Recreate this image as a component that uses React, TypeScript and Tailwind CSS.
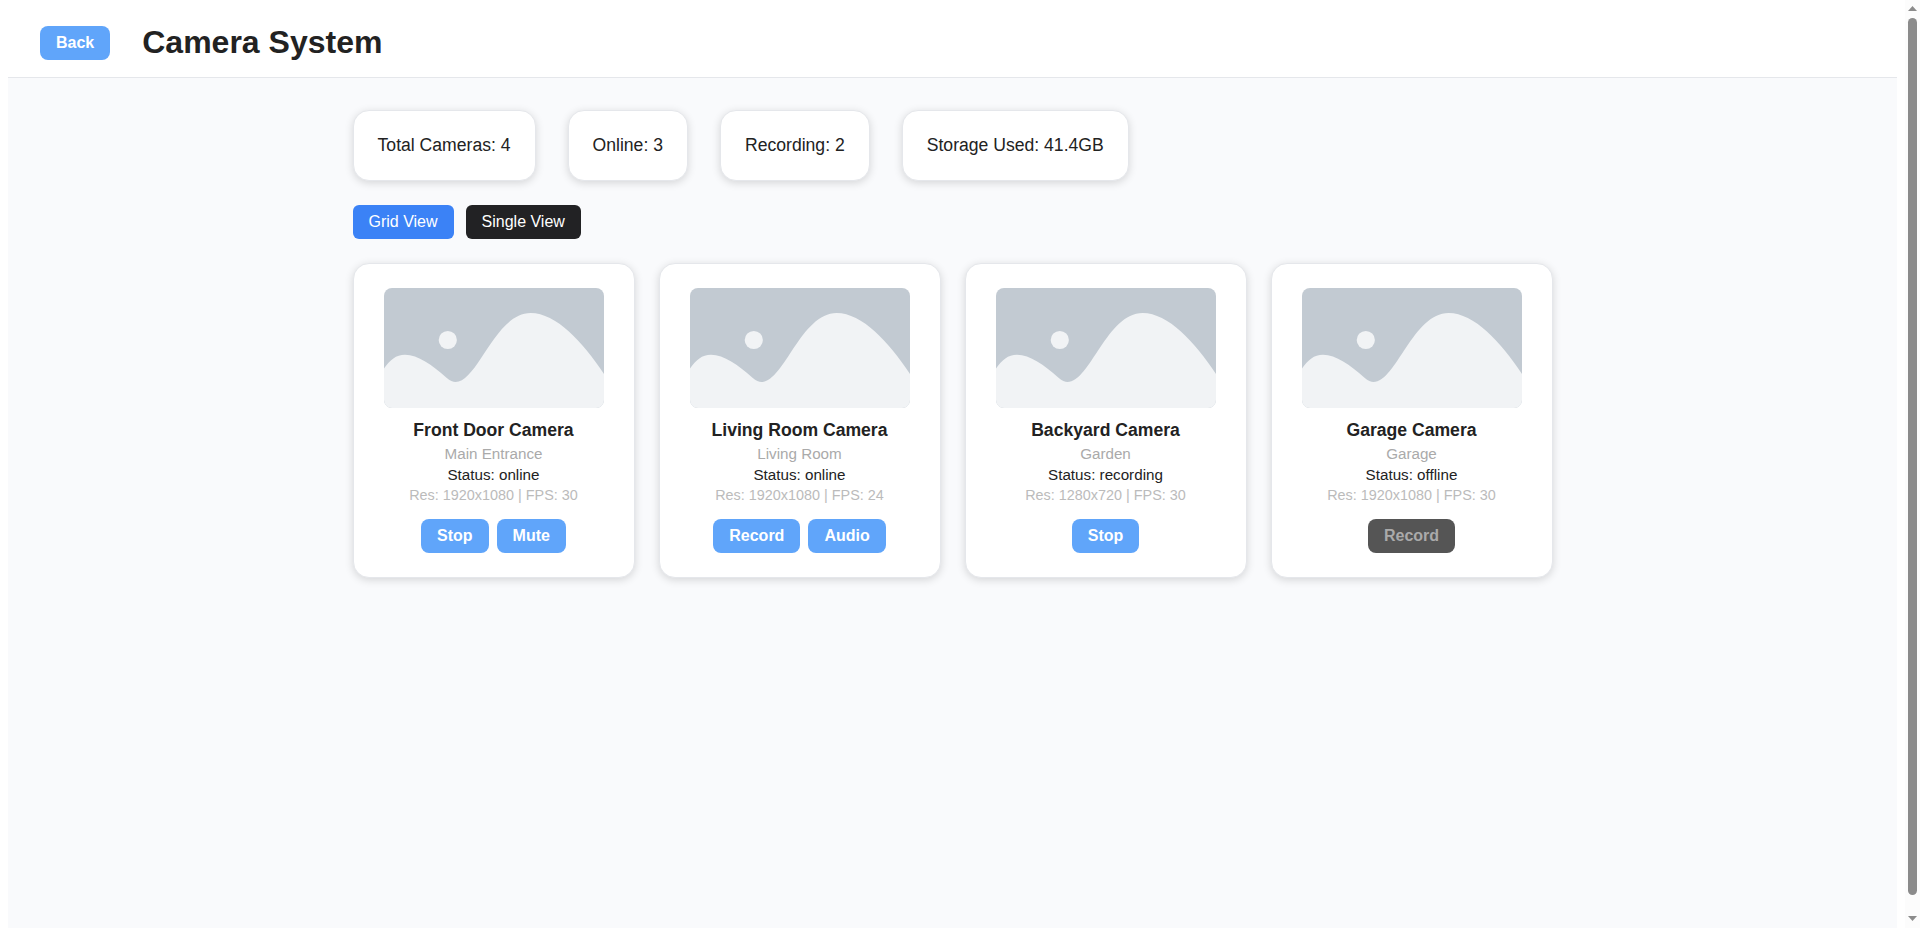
type Camera = {
  name: string;
  location: string;
  status: string;
  resolution: string;
  fps: number;
  actions: { label: string; disabled?: boolean }[];
};

const cameras: Camera[] = [
  { name: "Front Door Camera", location: "Main Entrance", status: "online", resolution: "1920x1080", fps: 30, actions: [{ label: "Stop" }, { label: "Mute" }] },
  { name: "Living Room Camera", location: "Living Room", status: "online", resolution: "1920x1080", fps: 24, actions: [{ label: "Record" }, { label: "Audio" }] },
  { name: "Backyard Camera", location: "Garden", status: "recording", resolution: "1280x720", fps: 30, actions: [{ label: "Stop" }] },
  { name: "Garage Camera", location: "Garage", status: "offline", resolution: "1920x1080", fps: 30, actions: [{ label: "Record", disabled: true }] },
];

const stats = ["Total Cameras: 4", "Online: 3", "Recording: 2", "Storage Used: 41.4GB"];

function ActionButton({ label, disabled }: { label: string; disabled?: boolean }) {
  return (
    <button
      disabled={disabled}
      className={
        disabled
          ? "rounded-lg bg-[#555] px-4 py-2 text-[16px] leading-[18px] font-semibold text-[#aaa]"
          : "rounded-lg bg-[#60a5fa] px-4 py-2 text-[16px] leading-[18px] font-semibold text-white"
      }
    >
      {label}
    </button>
  );
}

function Placeholder() {
  return (
    <svg viewBox="0 0 220 120" className="block h-[120px] w-[220px] rounded-lg bg-[#c2cad2]">
      <path
        d="M0 80.5 C6 72 12 66.8 21 66.8 C34 66.8 48 77 62.5 89.8 C66 93 69 94 71.5 94 C94 94 111 25 146.7 25 C172 25 199 54 220 86 V120 H0 Z"
        fill="#f1f3f5"
      />
      <circle cx="63.8" cy="52" r="9.1" fill="#f1f3f5" />
    </svg>
  );
}

function CameraCard({ camera }: { camera: Camera }) {
  return (
    <article className="flex flex-col items-center rounded-2xl border border-[#e5e7eb] bg-white p-6 shadow-[0_2px_8px_rgba(0,0,0,0.15)]">
      <Placeholder />
      <h3 className="mt-3 text-[17.6px] leading-5 font-semibold">{camera.name}</h3>
      <p className="mt-[5px] text-[15.2px] leading-[17px] text-[#aaa]">{camera.location}</p>
      <p className="mt-1 text-[15.2px] leading-[17px]">Status: {camera.status}</p>
      <p className="mt-1 text-[14.4px] leading-4 text-[#bbb]">
        Res: {camera.resolution} | FPS: {camera.fps}
      </p>
      <div className="mt-4 flex gap-2">
        {camera.actions.map((a) => (
          <ActionButton key={a.label} label={a.label} disabled={a.disabled} />
        ))}
      </div>
    </article>
  );
}

function Scrollbar() {
  return (
    <div className="flex w-[15px] shrink-0 flex-col items-center bg-[#fcfcfc]">
      <svg viewBox="0 0 15 18" className="h-[18px] w-[15px] shrink-0">
        <path d="M3 11 L7.5 6 L12 11 Z" fill="#8b8b8b" />
      </svg>
      <div className="h-[877px] w-[9px] rounded-full bg-[#8b8b8b]" />
      <svg viewBox="0 0 15 33" className="h-[33px] w-[15px] shrink-0">
        <path d="M3 21 L7.5 26 L12 21 Z" fill="#8b8b8b" />
      </svg>
    </div>
  );
}

export default function App() {
  return (
    <div className="flex h-[928px] overflow-hidden bg-white font-['Liberation_Sans',Arial,sans-serif] text-[#222]">
      <div className="flex min-w-0 flex-1 flex-col px-2 pt-2">
        <header className="flex h-[70px] shrink-0 items-center gap-8 border-b border-[#e5e7eb] bg-white px-8">
          <ActionButton label="Back" />
          <h1 className="text-[32px] leading-[37px] font-bold">Camera System</h1>
        </header>
        <main className="flex-1 bg-[#f9fafc] pt-8">
          <div className="mx-auto w-[1200px]">
            <div className="flex gap-8 pl-[0.05px]">
              {stats.map((s) => (
                <div
                  key={s}
                  className="rounded-2xl border border-[#e5e7eb] bg-white p-6 text-[17.6px] leading-[21px] shadow-[0_2px_8px_rgba(0,0,0,0.15)]"
                >
                  {s}
                </div>
              ))}
            </div>
            <div className="mt-6 flex gap-3">
              <button className="rounded-md bg-[#3b82f6] px-4 py-2 text-[16px] leading-[18px] text-white">Grid View</button>
              <button className="rounded-md bg-[#222224] px-4 py-2 text-[16px] leading-[18px] text-white">Single View</button>
            </div>
            <div className="mt-6 grid grid-cols-4 gap-6">
              {cameras.map((c) => (
                <CameraCard key={c.name} camera={c} />
              ))}
            </div>
          </div>
        </main>
      </div>
      <Scrollbar />
    </div>
  );
}
